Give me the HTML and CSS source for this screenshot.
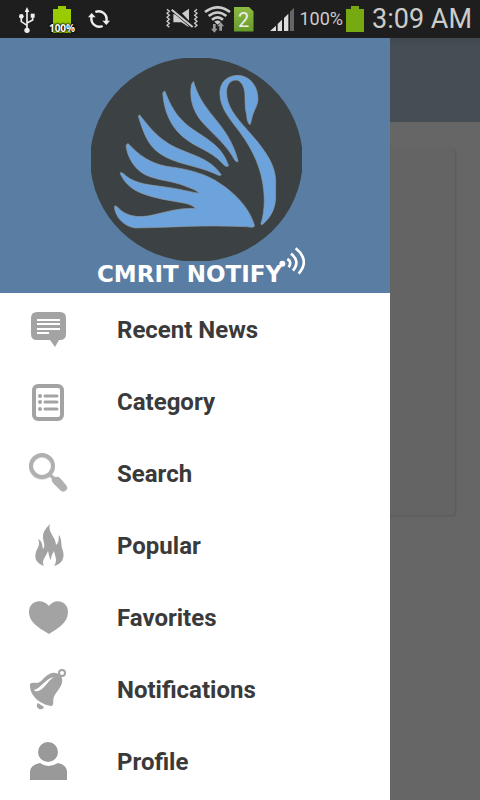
FILE: index.html
```html
<!DOCTYPE html>
<html lang="en">

<head>
  <meta charset="UTF-8" />
  <meta name="viewport" content="width=device-width, initial-scale=1.0" />
  <title>CMRIT Notify</title>
  <link rel="stylesheet" href="styles.css">
</head>

<body>
  <!-- Status bar -->
  <div class="status-bar">
    <div class="status-left">
      <svg width="18" height="27" viewBox="0 0 54 81" fill="none" stroke="#eee" stroke-width="5">
        <path d="M27 10V72M27 58L10 47V32M27 51L44 42V30" />
        <path d="M27 3L34 18H20Z" fill="#eee" stroke="none" />
        <circle cx="27" cy="73" r="8" fill="#eee" stroke="none" />
        <circle cx="10" cy="31" r="7" fill="#eee" stroke="none" />
        <path d="M38 23H50V35H38Z" fill="#eee" stroke="none" />
      </svg>
      <div class="charge">
        <svg width="18" height="27" viewBox="0 0 18 27" fill="#9c0">
          <path d="M5 0H13V3H18V27H0V3H5Z" />
        </svg>
        <span class="charge-text">100%</span>
      </div>
      <svg width="22" height="20" viewBox="0 0 66 60" fill="none" stroke="#eee" stroke-width="7">
        <path d="M22 9A24 24 0 0 1 55 37M44 51A24 24 0 0 1 11 23" />
        <path d="M43 35H66L55 48ZM0 25L11 12L23 25Z" fill="#eee" stroke="none" />
      </svg>
    </div>
    <div class="status-right">
      <svg width="32" height="22" viewBox="0 0 96 66" fill="none" stroke="#ccc" stroke-width="4">
        <path d="M3 4L10 10L3 16L10 22L3 28L10 34L3 40L10 46L3 52L10 58M93 4L86 10L93 16L86 22L93 28L86 34L93 40L86 46L93 52L86 58" />
        <path d="M22 19H36L68 49V57L46 43H22ZM48 16L69 2V38Z" fill="#ccc" stroke="none" />
        <path d="M16 3L80 58" stroke="#1e1e1e" stroke-width="10" />
        <path d="M17 5L80 57" stroke-width="6" />
      </svg>
      <svg class="wifi" width="27" height="27" viewBox="0 0 81 81" fill="none" stroke="#ccc" stroke-width="8">
        <path d="M3 18Q41 -10 78 18M14 30Q41 9 67 30M24 41Q41 27 57 41" />
        <path d="M31 47Q41 40 50 47L41 56Z" fill="#ccc" stroke="none" />
        <path d="M27 54H35V68H41L31 80L21 68H27ZM46 74H54V61H60L50 48L40 61H46Z" fill="#999" stroke="none" />
      </svg>
      <span class="sim">2</span>
      <svg class="bars" width="24" height="24" viewBox="0 0 72 72" fill="#ddd">
        <path d="M0 72L18 56V72ZM23 51L36 38V72H23ZM42 33L55 20V72H42Z" />
        <path d="M60 14L72 2V72H60Z" fill="#666" />
      </svg>
      <span class="percent">100%</span>
      <svg class="battery" width="18" height="26" viewBox="0 0 18 26" fill="#7a1">
        <path d="M5 0H13V3H18V26H0V3H5Z" />
      </svg>
      <time class="clock">3:09 AM</time>
    </div>
  </div>

  <div class="screen">
    <!-- Dimmed page under the drawer -->
    <main class="page">
      <div class="toolbar"></div>
      <div class="card"></div>
    </main>

    <!-- Navigation drawer -->
    <aside class="drawer">
      <header class="drawer-header">
        <svg class="logo" width="211" height="203" viewBox="33 30 632 608" fill="#6ca3dc" stroke="#8f9ba5" stroke-width="2">
          <ellipse cx="349" cy="334" rx="318" ry="306" fill="#3c4144" stroke="none" />
          <path d="M509 230C500 222 500 207 499 199C493 178 495 157 494 137C492 115 482 96 467 96C449 96 439 112 439 133C439 174 467 207 500 244C546 296 585 344 586 397V450C584 485 570 509 546 529C543 530 541 527 543 523C552 493 553 462 551 434C546 363 517 304 480 254C453 217 419 182 419 135C419 103 440 83 472 82C508 83 533 113 533 153C533 169 525 180 521 191C514 206 514 221 509 230Z" />
          <path d="M340 100C352 143 372 171 399 205C430 242 459 281 473 337C474 344 468 342 463 335C437 287 403 264 366 222C337 188 327 148 334 109Z" />
          <path d="M254 129C272 174 285 199 320 230C363 266 423 284 445 353C437 358 431 351 425 344C391 306 346 299 307 265C268 231 251 184 248 134Z" />
          <path d="M178 200C205 233 225 261 266 287C316 318 387 324 423 380C418 385 411 379 401 375C349 352 282 347 239 316C199 289 187 242 175 205Z" />
          <path d="M144 286C177 322 211 345 257 354C310 361 358 370 404 396C461 430 508 478 523 533C518 540 505 535 492 535C371 529 263 538 165 539C132 534 105 507 103 474C110 470 116 481 123 487C151 509 190 508 224 499C266 489 301 478 347 481C331 465 306 464 286 460C239 452 182 440 155 419C136 405 126 389 120 374C127 371 133 379 140 385C169 408 216 411 254 416C294 421 325 430 356 435C350 425 329 420 311 412C277 398 230 397 194 379C162 361 141 326 138 291Z" />
        </svg>
        <div class="brand">
          <span class="brand-name">CMRIT NOTIFY</span>
          <svg class="waves" width="27" height="30" viewBox="0 0 81 90" fill="none" stroke="#fff">
            <circle cx="13" cy="50" r="9" fill="#fff" stroke="none" />
            <path d="M28 36Q43 45 32 61" stroke-width="8" />
            <path d="M39 20Q68 43 45 71" stroke-width="8" />
            <path d="M53 4Q97 40 62 80" stroke-width="8" />
          </svg>
        </div>
      </header>

      <nav class="menu">
        <a class="menu-item" href="#recent">
          <svg class="icon" viewBox="0 0 40 48">
            <path d="M8 6H31Q37 6 37 12V28Q37 34 31 34H30L26 41L21 34H8Q2 34 2 28V12Q2 6 8 6Z" />
            <path d="M8 14H31M8 18H31M8 23H31M8 27H20" fill="none" stroke="#fff" stroke-width="2" />
          </svg>
          <span>Recent News</span>
        </a>
        <a class="menu-item" href="#category">
          <svg class="icon" viewBox="0 0 40 48">
            <rect x="5" y="8" width="28" height="33" rx="4" fill="none" stroke="#a3a3a3" stroke-width="4" />
            <path d="M16 18H28M16 24H28M16 31H28" fill="none" stroke="#a3a3a3" stroke-width="3" stroke-linecap="round" />
            <circle cx="11" cy="18" r="2" />
            <circle cx="11" cy="24" r="2" />
            <circle cx="11" cy="31" r="2" />
          </svg>
          <span>Category</span>
        </a>
        <a class="menu-item" href="#search">
          <svg class="icon" viewBox="0 0 40 48">
            <circle cx="13" cy="17" r="11" fill="none" stroke="#e2e2e2" stroke-width="4" />
            <circle cx="13" cy="16" r="11" fill="none" stroke="#b0b0b0" stroke-width="4" />
            <path d="M20 26L22 24L26 27Q29 26 31 28L37 35Q40 39 36 41Q34 43 31 40L24 33Q22 30 23 29Z" fill="#b0b0b0" />
          </svg>
          <span>Search</span>
        </a>
        <a class="menu-item" href="#popular">
          <svg class="icon" viewBox="0 0 40 48">
            <path d="M21 2C18 10 27 15 27 23C31 20 29 16 30 13C33 18 32 22 33 26C37 36 33 42 25 44C29 38 26 35 25 29C23 33 22 34 22 38C20 36 20 32 19 29C17 35 12 38 15 44C7 41 5 36 7 30C8 26 12 23 9 17C14 19 13 25 14 27C17 24 14 20 14 15C14 9 18 5 21 2Z" />
          </svg>
          <span>Popular</span>
        </a>
        <a class="menu-item" href="#favorites">
          <svg class="icon" viewBox="0 0 40 48">
            <path d="M20 12C25 4 39 6 39 18C39 29 28 35 20 40C12 35 0 29 0 18C0 6 14 4 20 12Z" />
          </svg>
          <span>Favorites</span>
        </a>
        <a class="menu-item" href="#notifications">
          <svg class="icon" viewBox="0 0 40 48">
            <circle cx="33" cy="7" r="3" fill="none" stroke="#a3a3a3" stroke-width="2" />
            <path d="M31 9C23 3 17 10 12 15C8 19 5 15 1 18C0 30 12 39 23 40C26 37 22 34 27 27C32 21 36 14 31 9Z" />
            <path d="M5 24C12 22 16 13 25 11C19 14 16 23 9 25Q6 26 5 24Z" fill="#fff" />
            <path d="M9 37L15 41Q14 44 10 43Q6 40 9 37Z" />
          </svg>
          <span>Notifications</span>
        </a>
        <a class="menu-item" href="#profile">
          <svg class="icon dark" viewBox="0 0 40 48">
            <circle cx="19" cy="14" r="10" />
            <path d="M1 42V34Q1 27 11 25Q19 31 29 25Q38 27 38 34V42Z" />
          </svg>
          <span>Profile</span>
        </a>
      </nav>
    </aside>
  </div>
</body>

</html>
```

FILE: styles.css
```css
* {
  box-sizing: border-box;
}

body {
  margin: 0;
  min-height: 100vh;
  display: flex;
  flex-direction: column;
  font-family: Roboto, "Liberation Sans", sans-serif;
  background-color: #666;
}

svg {
  flex-shrink: 0;
}

/* Status bar */
.status-bar {
  display: flex;
  justify-content: space-between;
  align-items: center;
  height: 38px;
  padding: 0 8px 0 18px;
  background-color: #1e1e1e;
  color: #ccc;
}

.status-left,
.status-right {
  display: flex;
  align-items: center;
}

.status-left {
  gap: 16px;
}

.charge {
  position: relative;
  display: flex;
  justify-content: center;
  width: 20px;
}

.charge-text {
  position: absolute;
  bottom: 0;
  font-family: "Open Sans", sans-serif;
  font-size: 10px;
  line-height: 10px;
  font-weight: bold;
  color: #fff;
  text-shadow: 0 0 2px #000, 0 0 2px #000, 0 0 2px #000;
}

.wifi {
  margin-left: 6px;
}

.sim {
  width: 20px;
  height: 25px;
  margin-left: 3px;
  background: linear-gradient(#8dbb42, #659a2b);
  clip-path: polygon(0 0, 75% 0, 100% 20%, 100% 100%, 0 100%);
  font-size: 20px;
  line-height: 27px;
  text-align: center;
  color: #eee;
}

.bars {
  margin-left: 16px;
}

.percent {
  margin-left: 6px;
  font-size: 18px;
  line-height: 38px;
}

.battery {
  margin-left: 3px;
}

.clock {
  margin-left: 8px;
  font-size: 27px;
  line-height: 38px;
}

/* The page and the drawer share one grid cell */
.screen {
  flex: 1;
  display: grid;
}

.page,
.drawer {
  grid-area: 1 / 1;
}

.toolbar {
  height: 84px;
  background: linear-gradient(#404850, #464d54 10px);
}

.card {
  height: 367px;
  margin: 26px 25px;
  border-radius: 3px;
  background-color: #646464;
  box-shadow: 1px 1px 2px #5a5a5a;
}

/* Drawer */
.drawer {
  width: 81.25%;
  background-color: #fff;
}

.drawer-header {
  display: flex;
  flex-direction: column;
  align-items: center;
  height: 255px;
  padding: 20px 0 0 2px;
  background-color: #5a7da3;
}

.brand {
  display: flex;
  align-items: flex-start;
  margin-top: -14px;
  margin-left: 10px;
}

.brand-name {
  margin-top: 14px;
  font-family: "DejaVu Sans", sans-serif;
  font-size: 23px;
  line-height: 26px;
  font-weight: bold;
  color: #fff;
}

.waves {
  margin-left: -4px;
}

/* Menu */
.menu {
  padding-top: 1px;
}

.menu-item {
  display: flex;
  align-items: center;
  gap: 48px;
  height: 72px;
  padding-left: 29px;
  font-size: 24px;
  font-weight: bold;
  color: #3a3a3a;
  text-decoration: none;
}

.icon {
  width: 40px;
  height: 48px;
  fill: #a3a3a3;
}

.dark {
  fill: #999;
}
```
